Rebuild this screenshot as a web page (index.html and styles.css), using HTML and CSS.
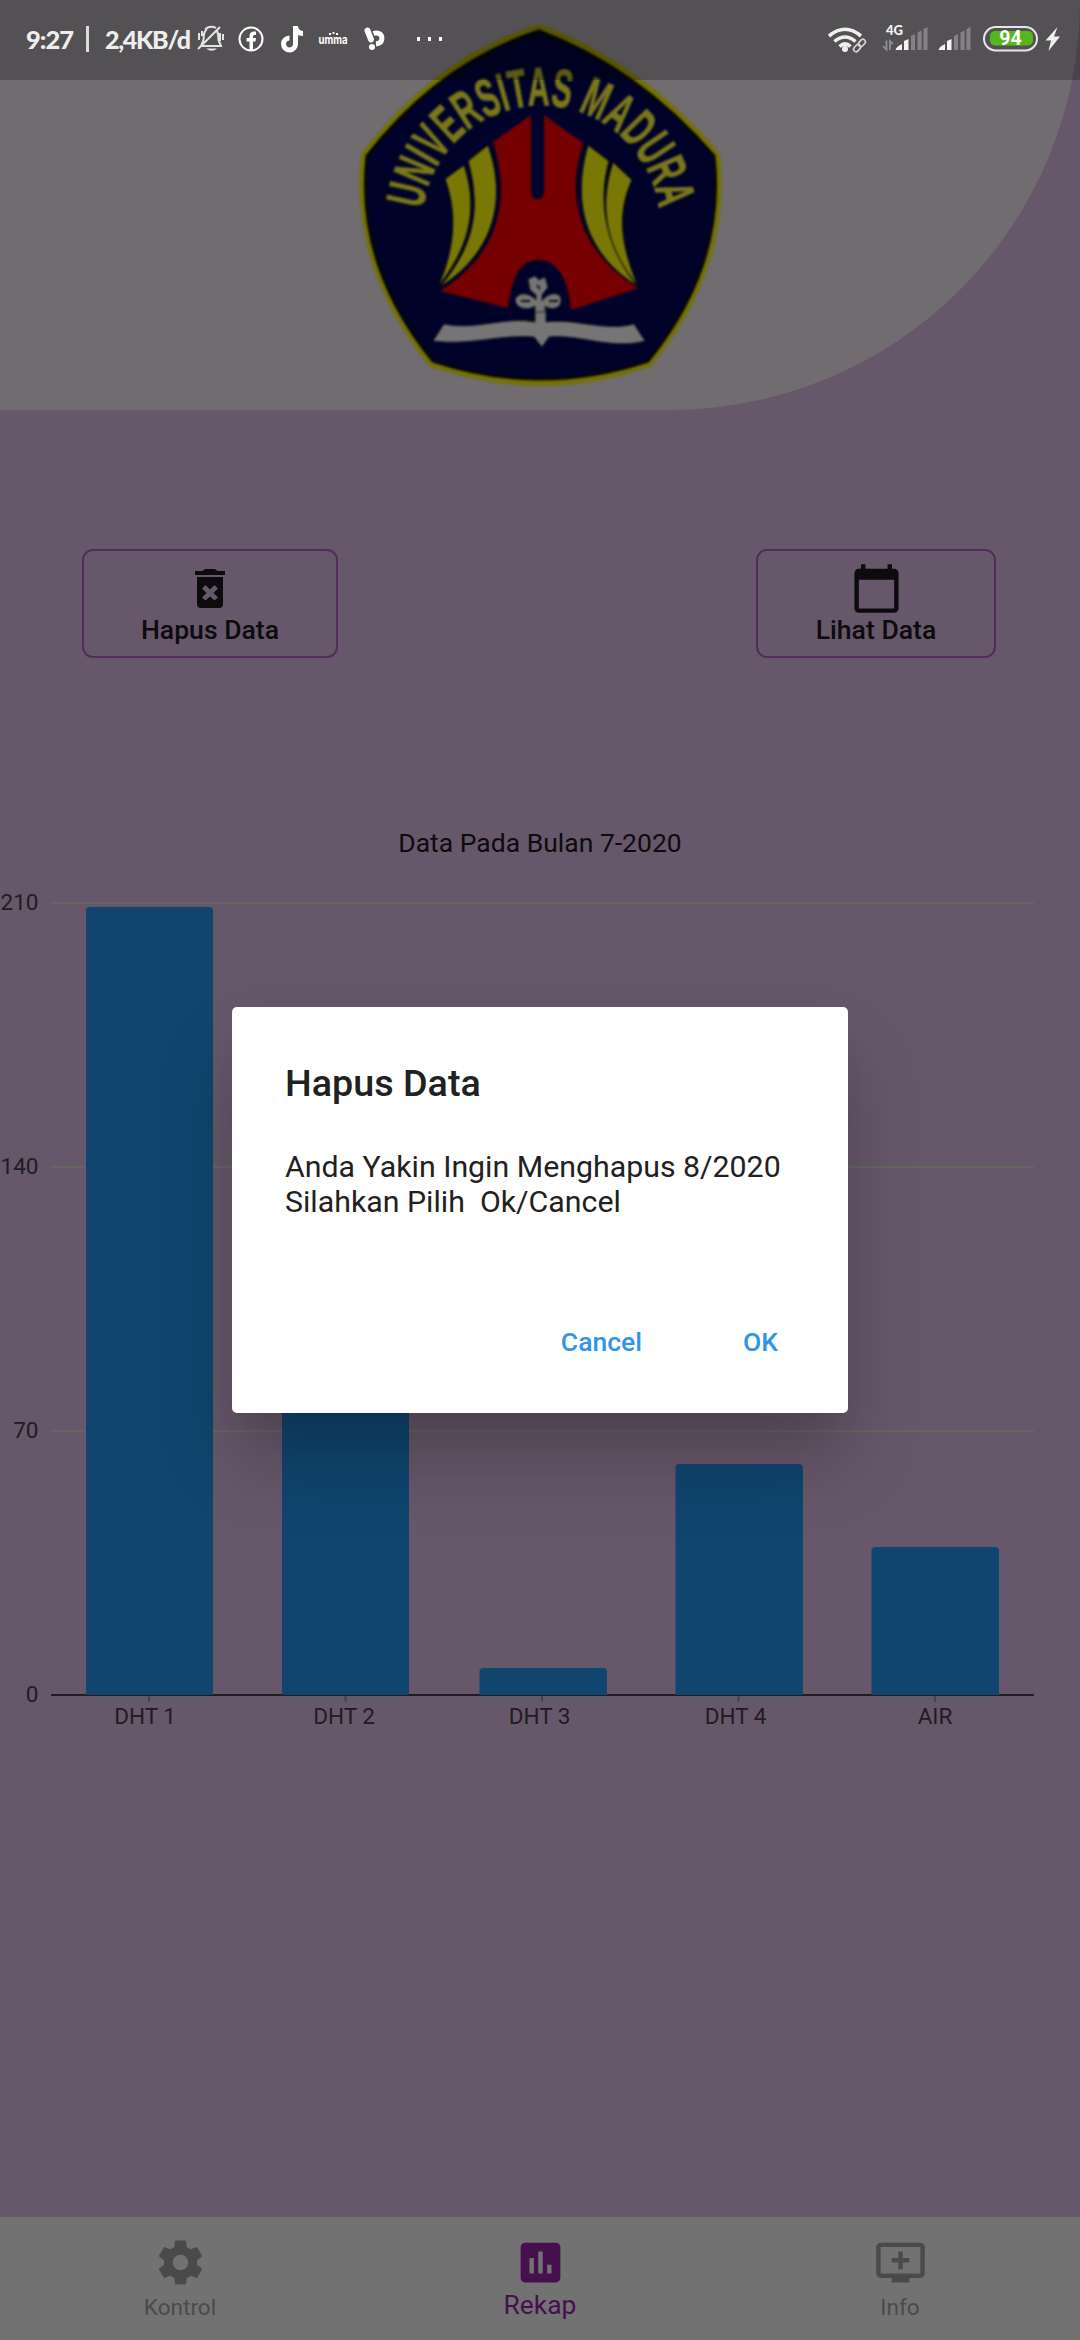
FILE: index.html
```html
<!DOCTYPE html>
<html lang="id">
<head>
<meta charset="utf-8">
<title>Rekap</title>
<link rel="stylesheet" href="styles.css">
</head>
<body>
<div class="screen">
  <header class="hero">
    <svg class="logo" viewBox="0 0 400 410" width="400" height="410">
      <path d="M199 28 Q300 66 376 155 Q388 265 309 363 Q200 401 92 363 Q13 265 25 155 Q98 60 199 28Z" fill="#00022a" stroke="#747105" stroke-width="8" stroke-linejoin="round"/>
      <path d="M199 31 Q299 69 374 156 Q386 265 308 361 Q200 397 93 361 Q15 265 27 156 Q99 63 199 31Z" fill="#00022a" stroke="#060608" stroke-width="3" stroke-linejoin="round"/>
      <path id="arc" d="M83 209 A119 119 0 0 1 319 209" fill="none"/>
      <text class="logo-text"><textPath href="#arc" textLength="342" lengthAdjust="spacingAndGlyphs">UNIVERSITAS MADURA</textPath></text>
      <path fill="#760000" d="M153 142 L191 115 V191 C191 202 204 202 204 191 V115 L243 143 C225 200 240 252 298 288 L231 310 C229 282 219 260 198 260 C178 260 171 282 168 308 L100 291 C158 255 172 202 153 142Z"/>
      <g fill="#7a7805" stroke="#03030c" stroke-width="1">
        <path d="M128 161 L148 145 C166 195 158 250 100 287 C130 250 143 215 128 161Z"/>
        <path d="M105 179 L124 165 C140 212 127 250 98 287 C114 250 118 215 105 179Z"/>
        <path d="M248 145 L269 161 C256 210 270 250 297 286 C243 252 232 200 248 145Z"/>
        <path d="M273 162 L292 180 C276 215 282 248 298 286 C268 250 257 210 273 162Z"/>
      </g>
      <g fill="#757575" stroke="#111" stroke-width=".8">
        <path d="M93 341 L104 324 C135 331 165 316 195 322 V308 L206 308 V322 C235 318 265 332 294 324 L305 341 C270 350 240 334 209 337 L202 347 L194 337 C160 334 130 346 93 341Z"/>
        <path d="M188 279 L195 276 L199 280 L205 277 L208 287 L202 295 V301 C208 292 222 291 221 301 C220 311 208 309 205 306 V312 H195 V306 C188 311 176 309 175 300 C178 291 190 293 196 300 V295 L190 290Z"/>
      </g>
      <path d="M181 301h9M209 301h9M197 285l3 4" stroke="#111" stroke-width="2"/>
    </svg>
  </header>

  <div class="actions">
    <button class="outlined wide">
      <svg width="32" height="40" viewBox="0 0 32 40" fill="#0e0b0e"><path d="M8.500 2 L11 0H21L23.500 2H31V6H1V2Z"/><path fill-rule="evenodd" d="M3 8H29V35Q29 39 25 39H7Q3 39 3 35ZM8 19.500 12.500 24 8 28.500 11.500 31.500 16 27.500 20.500 31.500 24 28.500 19.500 24 24 19.500 20.500 16 16 20.500 11.500 16Z"/></svg>
      <span>Hapus Data</span>
    </button>
    <button class="outlined narrow">
      <svg width="53" height="53" viewBox="0 0 24 24" fill="#0e0b0e"><path d="M20 3h-1V1h-2v2H7V1H5v2H4c-1.100 0-2 .9-2 2v16c0 1.100.9 2 2 2h16c1.100 0 2-.9 2-2V5c0-1.100-.9-2-2-2zm0 18H4V8h16v13z"/></svg>
      <span>Lihat Data</span>
    </button>
  </div>

  <h2 class="chart-title">Data Pada Bulan 7-2020</h2>
  <svg class="chart" width="1080" height="860" viewBox="0 880 1080 860">
    <path d="M51 903H1034M51 1167H1034M51 1431H1034" stroke="#656663" stroke-width="2"/>
    <path d="M51 1695H1034" stroke="#211c22" stroke-width="2"/>
    <path d="M149 1696v6M345.500 1696v6M542 1696v6M738.500 1696v6M935 1696v6" stroke="#4b414d" stroke-width="2"/>
    <g fill="#10456e">
      <path d="M86 1695V911q0-4 4-4H209q4 0 4 4V1695Z"/>
      <path d="M282 1695V1304q0-4 4-4H405q4 0 4 4V1695Z"/>
      <path d="M479.500 1695V1672q0-4 4-4H603q4 0 4 4V1695Z"/>
      <path d="M675.500 1695V1468q0-4 4-4H799q4 0 4 4V1695Z"/>
      <path d="M871.500 1695V1551q0-4 4-4H995q4 0 4 4V1695Z"/>
    </g>
    <g class="axis" text-anchor="end">
      <text x="38.500" y="910">210</text><text x="38.500" y="1174">140</text><text x="38.500" y="1438">70</text><text x="38.500" y="1702">0</text>
    </g>
    <g class="axis" text-anchor="middle">
      <text x="145" y="1724">DHT 1</text><text x="344" y="1724">DHT 2</text><text x="539.500" y="1724">DHT 3</text><text x="735.500" y="1724">DHT 4</text><text x="935" y="1724">AIR</text>
    </g>
  </svg>

  <nav class="tabs">
    <a class="tab">
      <svg width="53" height="53" viewBox="0 0 24 24"><path d="M19.430 12.980c.04-.32.07-.64.07-.98s-.03-.66-.07-.98l2.110-1.650c.19-.15.24-.42.12-.64l-2-3.460c-.12-.22-.39-.3-.61-.22l-2.490 1c-.52-.4-1.080-.73-1.690-.98l-.38-2.650C14.460 2.180 14.250 2 14 2h-4c-.25 0-.46.18-.49.42l-.38 2.650c-.61.25-1.170.59-1.690.98l-2.490-1c-.23-.09-.49 0-.61.22l-2 3.460c-.13.22-.07.49.12.64l2.110 1.650c-.04.32-.07.65-.07.98s.03.66.07.98l-2.110 1.650c-.19.15-.24.42-.12.64l2 3.460c.12.22.39.3.61.22l2.490-1c.52.4 1.080.73 1.690.98l.38 2.650c.03.24.24.42.49.42h4c.25 0 .46-.18.49-.42l.38-2.650c.61-.25 1.170-.59 1.690-.98l2.490 1c.23.09.49 0 .61-.22l2-3.460c.12-.22.07-.49-.12-.64l-2.110-1.650zM12 15.500c-1.930 0-3.500-1.570-3.500-3.500s1.570-3.500 3.500-3.500 3.500 1.570 3.500 3.500-1.570 3.500-3.500 3.500z"/></svg>
      <span>Kontrol</span>
    </a>
    <a class="tab active">
      <svg width="53" height="53" viewBox="0 0 24 24"><path d="M19 3H5c-1.100 0-2 .9-2 2v14c0 1.100.9 2 2 2h14c1.100 0 2-.9 2-2V5c0-1.100-.9-2-2-2zM9 17H7v-7h2v7zm4 0h-2V7h2v10zm4 0h-2v-4h2v4z"/></svg>
      <span>Rekap</span>
    </a>
    <a class="tab">
      <svg width="53" height="53" viewBox="0 0 24 24"><path d="M21 3H3c-1.110 0-2 .89-2 2v12c0 1.100.89 2 2 2h5v2h8v-2h5c1.100 0 1.990-.9 1.990-2L23 5c0-1.110-.9-2-2-2zm0 14H3V5h18v12zm-5-7v2h-3v3h-2v-3H8v-2h3V7h2v3h3z"/></svg>
      <span>Info</span>
    </a>
  </nav>

  <div class="status">
    <span class="clock">9:27</span>
    <i class="sep"></i>
    <span class="speed">2,4KB/d</span>
    <svg class="bell" width="28" height="28" viewBox="0 0 28 28" fill="none" stroke="#e4e3e4" stroke-width="2"><path d="M10 4C7 6 6.500 9 6.500 15L4 21H24L21.500 15C21.500 11 21 8 20 6M8 4Q14 0 19 3M1 24 23 2M2 8v7M5 6v5M23 8v8M26 9v6"/><path d="M9 23.500h11q-5 4.500-11 0z" fill="#e4e3e4" stroke="none"/></svg>
    <svg class="fb" width="26" height="26" viewBox="0 0 26 26"><circle cx="13" cy="13" r="11.500" fill="none" stroke="#fff" stroke-width="2"/><path d="M11.500 24V15.500H8.500V12H11.500V10Q11.500 5.500 16 5.500H18V9H16.500Q15 9 15 10.500V12H18L17.500 15.500H15V24Z" fill="#fff"/></svg>
    <svg class="tiktok" width="23" height="27" viewBox="0 0 23 27" fill="none" stroke="#fff" stroke-width="5"><path d="M14.500 0V17.500A6 6 0 1 1 8.500 12M14.500 1Q15.500 7.500 22 7.500"/></svg>
    <svg class="umma" width="43" height="26" viewBox="-4 -6 43 26" fill="#fff"><path d="M11 1h2v2h-2zM14.500 0h2v2h-2zM18 1h2v2h-2z"/><text x="0.500" y="12" textLength="29" lengthAdjust="spacingAndGlyphs">umma</text></svg>
    <svg class="buka" width="23" height="24" viewBox="0 0 23 24"><path d="M4.500 3.500 8 12.500" stroke="#fff" stroke-width="6" stroke-linecap="round"/><circle cx="9" cy="20" r="3" fill="#fff"/><path d="M10.500 6.500C16 4.500 19.500 8 18.800 12.500Q18 16.500 13 17" fill="none" stroke="#fff" stroke-width="5"/></svg>
    <span class="dots"><i></i><i></i><i></i></span>
    <svg class="system" width="235" height="32" viewBox="825 23 235 32">
      <g fill="none" stroke="#f0eff0" stroke-width="3.600"><path d="M828 36Q844 22.500 860 36M833.500 41.500Q844 32.500 854.500 41.500M838.500 46.500Q844 41.500 849.500 46.500"/></g>
      <circle cx="844" cy="49" r="3" fill="#f0eff0"/>
      <g transform="rotate(-47 858.500 45.500)" fill="none" stroke="#554f54" stroke-width="4"><rect x="851" y="43" width="8" height="5" rx="2.500"/><rect x="858" y="43" width="8" height="5" rx="2.500"/></g>
      <g transform="rotate(-47 858.500 45.500)" fill="none" stroke="#d8d7d8" stroke-width="1.600"><rect x="851" y="43" width="8" height="5" rx="2.500"/><rect x="858" y="43" width="8" height="5" rx="2.500"/></g>
      <text class="net" x="885" y="35">4G</text>
      <path d="M885.500 40.500V49.500L882 46M889 50V41L892 44" fill="none" stroke="#969396" stroke-width="1.700"/>
      <g id="signal">
        <path d="M894.500 50Q895 47 901 44V50ZM903 50V41L907.500 39V50Z" fill="#f4f3f4"/>
        <path d="M910 50V36L914 34V50ZM916.500 50V32.500L920.500 30.500V50ZM922.500 50V29L926.500 27V50Z" fill="#858185"/>
      </g>
      <use href="#signal" x="43"/>
      <rect x="983" y="27" width="53" height="23.500" rx="11.700" fill="none" stroke="#e8e7e8" stroke-width="2"/>
      <rect x="989" y="31" width="43" height="14.500" rx="5" fill="#56b71a"/>
      <text class="charge" x="1009.500" y="45.300" text-anchor="middle">94</text>
      <path d="M1056.500 27 1044.500 40.500H1050L1047.500 51 1059 36.500H1053Z" fill="#f0eff0"/>
    </svg>
  </div>

  <section class="dialog">
    <h1>Hapus Data</h1>
    <p>Anda Yakin Ingin Menghapus 8/2020<br>Silahkan Pilih&nbsp; Ok/Cancel</p>
    <div class="dialog-actions"><button>Cancel</button><button>OK</button></div>
  </section>
</div>
</body>
</html>
```
FILE: styles.css
```css
* { box-sizing: border-box; margin: 0; padding: 0; }
body { background: #66576a; }
button { background: none; border: 0; font: inherit; color: inherit; }
svg { display: block; flex: none; }

.screen {
  position: relative;
  display: flex;
  flex-direction: column;
  width: 1080px;
  height: 2340px;
  overflow: hidden;
  background: #66576a;
  font-family: Roboto, "Liberation Sans", sans-serif;
}

.hero {
  display: flex;
  justify-content: center;
  height: 410px;
  flex: none;
  background: #706c70;
  border-bottom-right-radius: 410px;
}
.logo { filter: blur(1px); }
.logo-text {
  font: 700 54px "Liberation Sans", sans-serif;
  fill: #7a771a;
  stroke: #7a771a;
  stroke-width: 1px;
}

.actions {
  display: flex;
  justify-content: space-between;
  padding: 139px 84px 0 82px;
}
.outlined {
  display: flex;
  flex-direction: column;
  align-items: center;
  height: 109px;
  border: 2px solid #532c5c;
  border-radius: 11px;
  color: #0e0b0e;
  font-size: 26.600px;
  font-weight: 500;
  line-height: 31px;
}
.outlined.wide { width: 256px; padding-top: 18px; }
.outlined.wide svg { margin-bottom: 5px; }
.outlined.narrow { width: 240px; padding-top: 11px; }
.outlined.narrow svg { margin-bottom: -1px; }

.chart-title {
  margin-top: 169px;
  text-align: center;
  font-size: 26.500px;
  font-weight: 400;
  line-height: 32px;
  color: #0e0b0e;
}
.chart { margin-top: 21px; }
.axis { font-size: 22.500px; fill: #211c22; }

.tabs {
  display: flex;
  height: 123px;
  margin-top: auto;
  background: #727272;
}
.tab {
  display: flex;
  flex: 1;
  flex-direction: column;
  align-items: center;
  padding-top: 19px;
  color: #4a4a4a;
  fill: #4a4a4a;
  font-size: 22.600px;
  line-height: 26px;
}
.tab span { margin-top: 6px; }
.tab.active { color: #46104f; fill: #46104f; font-size: 26.400px; line-height: 30px; }
.tab.active span { margin-top: 1px; }

.status {
  position: absolute;
  inset: 0 0 auto 0;
  display: flex;
  align-items: center;
  height: 80px;
  padding: 0 19px 2px 26px;
  background: rgba(0, 0, 0, .25);
  color: #efeeef;
  font: 900 26px Lato, sans-serif;
  white-space: nowrap;
}
.clock { width: 60px; margin-top: -1px; font-size: 25.500px; letter-spacing: -1px; }
.sep { width: 3px; height: 26px; background: #dddcdd; }
.speed { width: 92px; margin: -1px 0 0 16px; font-size: 25px; letter-spacing: -1.300px; }
.bell { margin-left: 0; }
.fb { margin-left: 13px; }
.tiktok { margin-left: 17px; }
.umma { margin-left: 10px; font: 700 12px Inter, sans-serif; }
.buka { margin-left: 6px; }
.dots { display: flex; gap: 8px; margin-left: 31px; }
.dots i { width: 3px; height: 4px; background: #fff; }
.system { margin-left: auto; }
.net { font: 900 13px Lato, sans-serif; fill: #f4f3f4; }
.charge { font: 700 19.500px Roboto, sans-serif; fill: #fff; }

.dialog {
  position: absolute;
  left: 232px;
  top: 1007px;
  width: 616px;
  height: 406px;
  padding: 53px 53px 0;
  background: #fff;
  border-radius: 5px;
  color: #212121;
  box-shadow: 0 24px 33px -15px rgba(0, 0, 0, .08), 0 48px 80px -4px rgba(0, 0, 0, .22);
}
.dialog h1 { font-size: 37.700px; font-weight: 500; line-height: 46px; }
.dialog p { margin-top: 43px; font-size: 30.300px; line-height: 35px; white-space: nowrap; }
.dialog-actions {
  display: flex;
  justify-content: flex-end;
  gap: 101px;
  margin-top: 107px;
  padding-right: 17px;
  color: #2f95e6;
  font-size: 26.500px;
  font-weight: 500;
  line-height: 31px;
}
```
